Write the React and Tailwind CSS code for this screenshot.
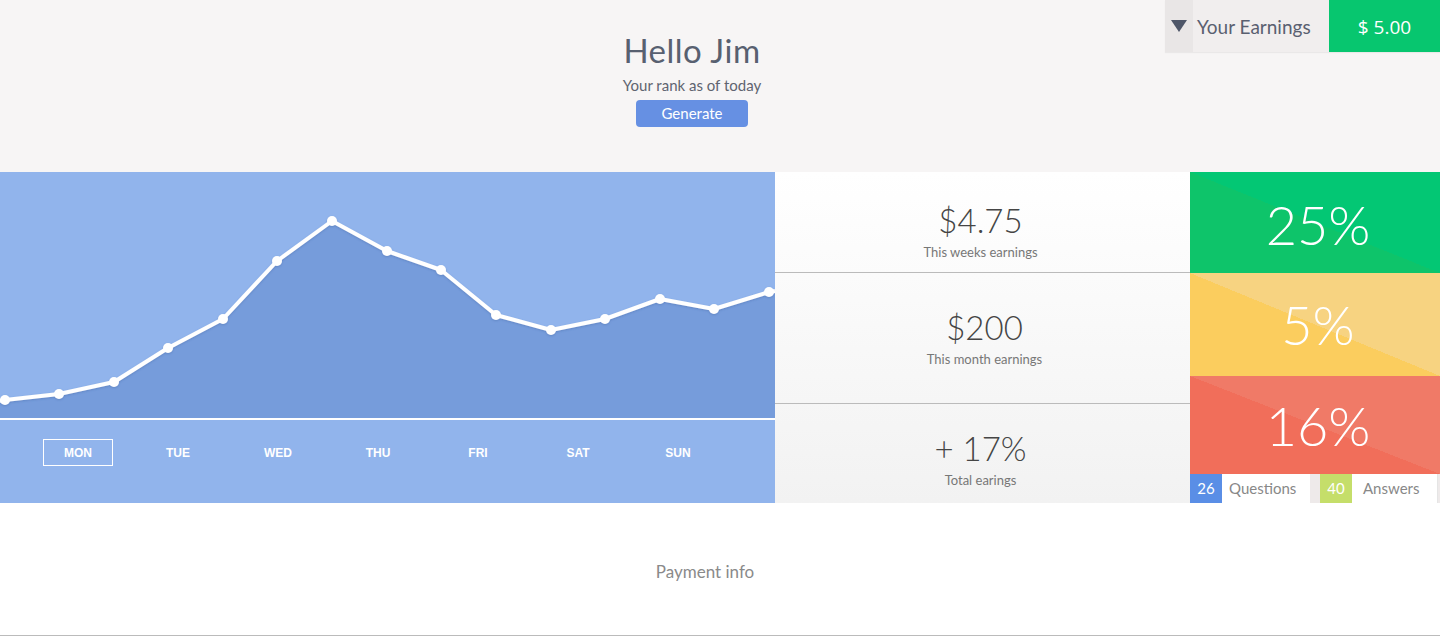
import React from "react"

const points = [
  [5, 228], [59, 222], [114, 210], [168, 176], [223, 147], [277, 89], [332, 49],
  [387, 79], [441, 98], [496, 143], [551, 158], [605, 147], [660, 127], [714, 137], [769, 120],
]

const days = ["MON", "TUE", "WED", "THU", "FRI", "SAT", "SUN"]

const font = { fontFamily: "Lato, 'Open Sans', sans-serif" }

const Chart = () => {
  const line = points.map((p) => p.join(",")).join(" ")
  const area = `0,230 ${line} 775,118 775,246 0,246`
  return (
    <svg width="775" height="246" viewBox="0 0 775 246" className="block">
      <defs>
        <filter id="sh" x="-5%" y="-5%" width="110%" height="120%">
          <feDropShadow dx="0" dy="1" stdDeviation="1" floodColor="#3b5f9e" floodOpacity="0.35" />
        </filter>
      </defs>
      <polygon points={area} fill="#769cdb" />
      <g filter="url(#sh)">
        <polyline points={`0,229 ${line} 775,119`} fill="none" stroke="#fff" strokeWidth="4" strokeLinejoin="round" />
        {points.map(([x, y]) => (
          <circle key={x} cx={x} cy={y} r="5" fill="#fff" />
        ))}
      </g>
    </svg>
  )
}

const StatRow = ({ value, label, className }) => (
  <div className={`flex flex-col items-center ${className}`}>
    <div className="text-[33px] font-light text-[#454545] leading-none">{value}</div>
    <div className="mt-[9px] text-[13px] text-[#777] leading-none">{label}</div>
  </div>
)

export default function App() {
  return (
    <div className="w-[1440px] h-[636px] bg-white overflow-hidden" style={font}>
      {/* header */}
      <header className="relative h-[172px] bg-[#f7f5f5] flex flex-col items-center pt-[34px] pr-[56px]">
        <h1 className="text-[33px] text-[#586070] leading-none tracking-[0.5px]">Hello Jim</h1>
        <p className="mt-[11px] text-[15px] text-[#5f6470] leading-none">Your rank as of today</p>
        <button className="mt-[7px] w-[112px] h-[27px] rounded-[4px] bg-[#6690e3] text-white text-[15px] leading-none">
          Generate
        </button>
        <div className="absolute top-0 right-0 flex h-[52px] shadow-[0_1px_1px_rgba(0,0,0,0.05)]">
          <div className="w-[28px] bg-[#e9e6e6] flex items-center justify-center">
            <svg width="16" height="12" viewBox="0 0 16 12">
              <polygon points="0,0 16,0 8,12" fill="#4e5668" />
            </svg>
          </div>
          <div className="w-[136px] bg-[#f1eeee] flex items-center pl-[4px] pt-[2px] text-[19px] text-[#5a6070]">
            Your Earnings
          </div>
          <div className="w-[111px] bg-[#07c66f] flex items-center justify-center pt-[2px] text-[19px] text-white" style={{ fontFamily: "'Open Sans', sans-serif" }}>
            $ 5.00
          </div>
        </div>
      </header>

      {/* main row */}
      <section className="flex h-[331px]">
        <div className="w-[775px] bg-[#91b4ec] flex flex-col">
          <Chart />
          <div className="h-[2px] bg-white" />
          <div className="flex pl-[43px] pt-[19px] gap-[30px]" style={{ fontFamily: "'Liberation Sans', Arial, sans-serif" }}>
            {days.map((d, i) => (
              <div
                key={d}
                className={`w-[70px] h-[27px] flex items-center justify-center text-[12px] font-bold text-white ${i === 0 ? "border border-white" : ""}`}
              >
                {d}
              </div>
            ))}
          </div>
        </div>

        <div className="w-[415px] bg-[linear-gradient(to_bottom,#ffffff,#f2f2f2)] flex flex-col">
          <StatRow value="$4.75" label="This weeks earnings" className="h-[101px] pt-[32px] pr-[4px] border-b border-[#bbbbbb]" />
          <StatRow value="$200" label="This month earnings" className="h-[131px] pt-[38px] pl-[4px] border-b border-[#bbbbbb]" />
          <StatRow value="+ 17%" label="Total earings" className="flex-1 pt-[28px] pr-[4px]" />
        </div>

        <div className="w-[250px] flex flex-col text-white">
          <div className="h-[101px] flex items-center justify-center pt-[4px] pl-[6px] text-[54px] font-light bg-[linear-gradient(to_bottom_left,#03c774_50%,#0ec46a_50%)]">
            25%
          </div>
          <div className="h-[103px] flex items-center justify-center pl-[6px] text-[54px] font-light bg-[linear-gradient(to_bottom_left,#f7d381_50%,#fbcd5e_50%)]">
            5%
          </div>
          <div className="h-[98px] flex items-center justify-center pl-[6px] text-[54px] font-light bg-[linear-gradient(to_bottom_left,#f07a67_50%,#f16e5a_50%)]">
            16%
          </div>
          <div className="flex-1 flex bg-[#eeeaea] text-[15px]">
            <div className="w-[32px] bg-[#5a8ee6] flex items-center justify-center">26</div>
            <div className="w-[88px] bg-white flex items-center pl-[7px] text-[#888]">Questions</div>
            <div className="w-[10px]" />
            <div className="w-[32px] bg-[#c5de6a] flex items-center justify-center">40</div>
            <div className="w-[86px] bg-white flex items-center pl-[11px] text-[#888] border-r border-[#e5e5e5]">Answers</div>
          </div>
        </div>
      </section>

      {/* payment */}
      <section className="h-[133px] border-b border-[#bbbbbb] flex items-center justify-center">
        <p className="text-[17px] text-[#8a8a8a] mr-[30px] mt-[6px]">Payment info</p>
      </section>
    </div>
  )
}
